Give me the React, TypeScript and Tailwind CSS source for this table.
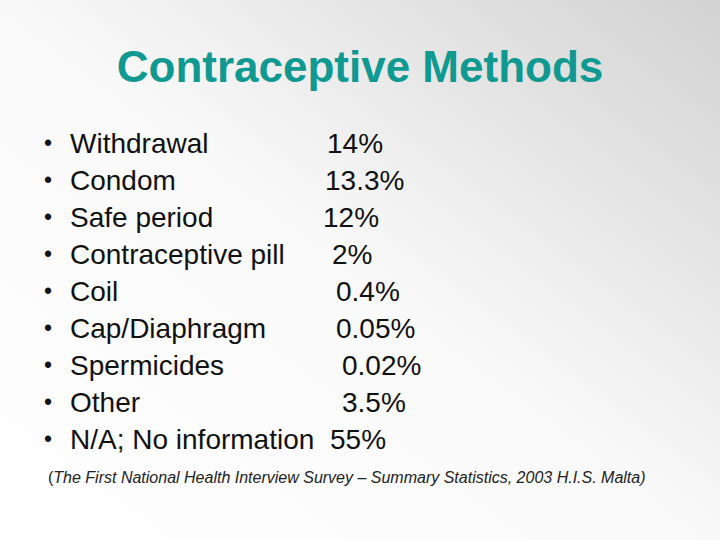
const rows = [
  { label: 'Withdrawal', value: '14%', pad: 'pl-[5px]' },
  { label: 'Condom', value: '13.3%', pad: 'pl-[3px]' },
  { label: 'Safe period', value: '12%', pad: 'pl-[1px]' },
  { label: 'Contraceptive pill', value: '2%', pad: 'pl-[10px]' },
  { label: 'Coil', value: '0.4%', pad: 'pl-[14px]' },
  { label: 'Cap/Diaphragm', value: '0.05%', pad: 'pl-[14px]' },
  { label: 'Spermicides', value: '0.02%', pad: 'pl-[20px]' },
  { label: 'Other', value: '3.5%', pad: 'pl-[20px]' },
  { label: 'N/A; No information', value: '55%', pad: 'pl-[8px]' },
]

export default function App() {
  return (
    <div className="flex h-[540px] w-[720px] flex-col overflow-hidden bg-linear-to-tr from-white via-[#f9f9f9] to-[#d2d2d2] font-['Liberation_Sans',Arial,sans-serif]">
      <h1 className="mt-[45px] text-center text-[44px] font-bold leading-[44px] text-[#0f9990]">
        Contraceptive Methods
      </h1>

      <ul className="mt-[36px] flex flex-col text-[28px] leading-[37px] text-[#111]">
        {rows.map((row) => (
          <li key={row.label} className="flex">
            <span className="w-[70px] pl-[44px] text-[23px]">•</span>
            <span className="w-[252px] whitespace-nowrap">{row.label}</span>
            <span className={`whitespace-nowrap ${row.pad}`}>{row.value}</span>
          </li>
        ))}
      </ul>

      <p className="mt-[10px] pl-[48px] text-[16px] italic leading-[20px] text-[#222]">
        <span className="not-italic">(</span>The First National Health Interview Survey – Summary Statistics, 2003 H.I.S. Malta)
      </p>
    </div>
  )
}
